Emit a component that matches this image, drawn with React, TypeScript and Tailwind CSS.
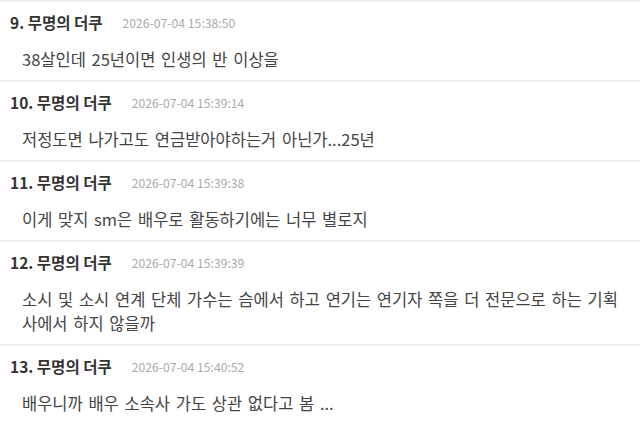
import React from 'react';

interface Comment {
  no: number;
  author: string;
  time: string;
  body: string;
}

const comments: Comment[] = [
  { no: 9, author: '무명의 더쿠', time: '2026-07-04 15:38:50', body: '38살인데 25년이면 인생의 반 이상을' },
  { no: 10, author: '무명의 더쿠', time: '2026-07-04 15:39:14', body: '저정도면 나가고도 연금받아야하는거 아닌가...25년' },
  { no: 11, author: '무명의 더쿠', time: '2026-07-04 15:39:38', body: '이게 맞지 sm은 배우로 활동하기에는 너무 별로지' },
  {
    no: 12,
    author: '무명의 더쿠',
    time: '2026-07-04 15:39:39',
    body: '소시 및 소시 연계 단체 가수는 슴에서 하고 연기는 연기자 쪽을 더 전문으로 하는 기획사에서 하지 않을까',
  },
  { no: 13, author: '무명의 더쿠', time: '2026-07-04 15:40:52', body: '배우니까 배우 소속사 가도 상관 없다고 봄 ...' },
];

function CommentRow({ c }: { c: Comment }) {
  return (
    <li className="border-t-2 border-[#f0f0f0] pt-[11px] pb-[9px]">
      <div className="flex items-center h-5 pl-[10px]">
        <span className="text-[15.5px] font-bold text-[#333]">
          {c.no}. {c.author}
        </span>
        <span className="ml-[20px] text-[12.2px] text-[#aaa]">{c.time}</span>
      </div>
      <p className="mt-[14px] pl-[22px] pr-[14px] text-[16.5px] leading-6 text-[#444] break-all [word-spacing:2px]">
        {c.body}
      </p>
    </li>
  );
}

export default function App() {
  return (
    <div
      className="w-[640px] h-[424px] overflow-hidden bg-white"
      style={{ fontFamily: '"Noto Sans CJK KR", "Noto Sans", sans-serif' }}
    >
      <ul>
        {comments.map((c) => (
          <CommentRow key={c.no} c={c} />
        ))}
      </ul>
    </div>
  );
}
